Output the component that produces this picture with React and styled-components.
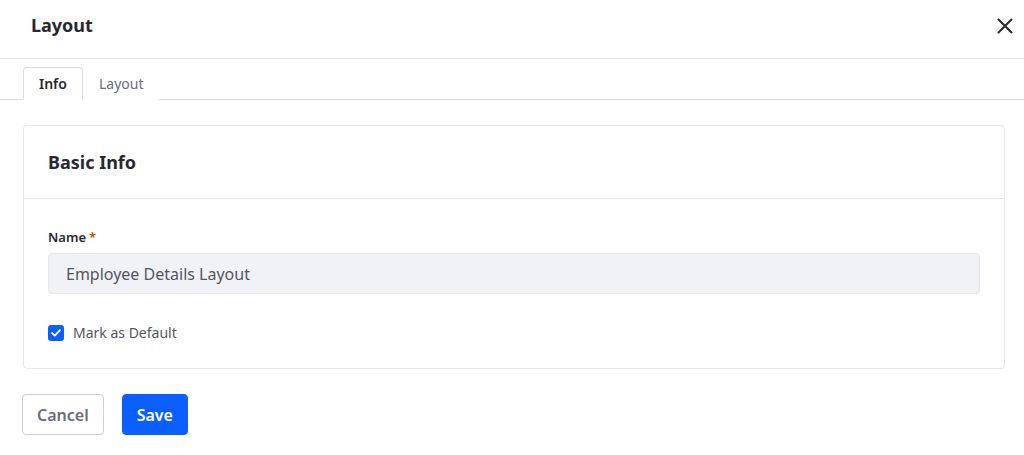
import React from "react";
import styled, { createGlobalStyle } from "styled-components";

const GlobalStyle = createGlobalStyle`
  body {
    margin: 0;
    background: #ffffff;
    font-family: "Noto Sans", "Open Sans", "Liberation Sans", sans-serif;
    color: #272833;
  }
  * {
    box-sizing: border-box;
  }
`;

const Modal = styled.div`
  width: 1024px;
  height: 455px;
  display: flex;
  flex-direction: column;
  background: #fff;
`;

const Header = styled.header`
  height: 59px;
  display: flex;
  align-items: flex-start;
  justify-content: space-between;
  padding: 11px 4px 0 31px;
  border-bottom: 1px solid #e7e7ed;
`;

const Title = styled.h1`
  margin: 0;
  font-size: 18px;
  line-height: 28px;
  font-weight: 700;
  color: #272833;
`;

const CloseButton = styled.button`
  width: 30px;
  height: 30px;
  border: 0;
  background: transparent;
  display: flex;
  align-items: center;
  justify-content: center;
  padding: 0;
  color: #272833;
  cursor: pointer;
`;

const TabBar = styled.nav`
  display: flex;
  margin-top: 8px;
  padding-left: 23px;
  border-bottom: 1px solid #dcdde3;
`;

const Tab = styled.button`
  height: 33px;
  margin-bottom: -1px;
  padding: 0 15px;
  font-family: inherit;
  font-size: 14px;
  font-weight: ${(p) => (p.$active ? 600 : 400)};
  color: ${(p) => (p.$active ? "#272833" : "#6b6c7e")};
  background: #fff;
  border: 1px solid ${(p) => (p.$active ? "#dcdde3" : "transparent")};
  border-bottom-color: ${(p) => (p.$active ? "#fff" : "transparent")};
  border-radius: 4px 4px 0 0;
  cursor: pointer;
`;

const Body = styled.main`
  padding: 25px 19px 0 23px;
`;

const Card = styled.section`
  border: 1px solid #e7e7ed;
  border-radius: 4px;
`;

const CardHeader = styled.div`
  height: 73px;
  display: flex;
  align-items: center;
  padding: 0 24px;
  border-bottom: 1px solid #e7e7ed;
`;

const CardTitle = styled.h2`
  margin: 0;
  font-size: 18px;
  font-weight: 700;
  color: #272833;
`;

const CardBody = styled.div`
  padding: 29px 24px 26px;
`;

const Label = styled.label`
  display: block;
  font-size: 13px;
  font-weight: 600;
  color: #272833;
  margin-bottom: 7px;
`;

const Required = styled.span`
  color: #b95000;
  margin-left: 3px;
`;

const Input = styled.input`
  display: block;
  width: 100%;
  height: 41px;
  padding: 0 17px;
  font-family: inherit;
  font-size: 16px;
  color: #54555f;
  background: #f1f2f5;
  border: 1px solid #e7e7ed;
  border-radius: 4px;
  outline: none;
`;

const CheckRow = styled.label`
  display: flex;
  align-items: center;
  gap: 9px;
  margin-top: 30px;
  font-size: 14px;
  line-height: 18px;
  color: #54555f;
`;

const CheckBox = styled.span`
  width: 16px;
  height: 16px;
  border-radius: 3px;
  background: #0b5fff;
  display: flex;
  align-items: center;
  justify-content: center;
`;

const Footer = styled.footer`
  display: flex;
  gap: 18px;
  padding: 25px 0 0 22px;
`;

const Button = styled.button`
  height: 41px;
  padding: 0 14px;
  font-family: inherit;
  font-size: 16px;
  font-weight: 600;
  border-radius: 4px;
  cursor: pointer;
  color: ${(p) => (p.$primary ? "#fff" : "#6b6c7e")};
  background: ${(p) => (p.$primary ? "#0b5fff" : "#fff")};
  border: 1px solid ${(p) => (p.$primary ? "#0b5fff" : "#cdced9")};
`;

export default function App() {
  return (
    <>
      <GlobalStyle />
      <Modal>
        <Header>
          <Title>Layout</Title>
          <CloseButton aria-label="close">
            <svg width="16" height="16" viewBox="0 0 16 16">
              <path
                d="M1.5 1.5 L14.5 14.5 M14.5 1.5 L1.5 14.5"
                stroke="#272833"
                strokeWidth="2"
                strokeLinecap="round"
              />
            </svg>
          </CloseButton>
        </Header>
        <TabBar>
          <Tab $active>Info</Tab>
          <Tab>Layout</Tab>
        </TabBar>
        <Body>
          <Card>
            <CardHeader>
              <CardTitle>Basic Info</CardTitle>
            </CardHeader>
            <CardBody>
              <Label>
                Name<Required>*</Required>
              </Label>
              <Input readOnly value="Employee Details Layout" />
              <CheckRow>
                <CheckBox>
                  <svg width="10" height="8" viewBox="0 0 10 8">
                    <path
                      d="M1 4 L3.8 6.6 L9 1.2"
                      stroke="#fff"
                      strokeWidth="1.8"
                      fill="none"
                      strokeLinecap="round"
                      strokeLinejoin="round"
                    />
                  </svg>
                </CheckBox>
                Mark as Default
              </CheckRow>
            </CardBody>
          </Card>
        </Body>
        <Footer>
          <Button>Cancel</Button>
          <Button $primary>Save</Button>
        </Footer>
      </Modal>
    </>
  );
}
